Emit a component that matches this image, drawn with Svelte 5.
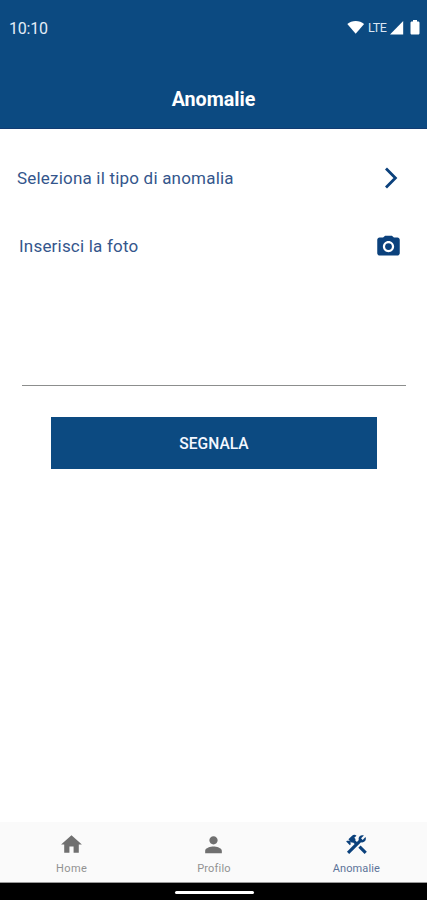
<script>
  const tabs = [
    { id: 'home', label: 'Home', spacing: 0.4 },
    { id: 'profile', label: 'Profilo', spacing: 0.2 },
    { id: 'issues', label: 'Anomalie', spacing: 0.1 }
  ];
  let active = $state('issues');
</script>

<div class="screen">
  <header>
    <div class="status">
      <span class="time">10:10</span>
      <div class="signals">
        <svg width="18" height="14" viewBox="0 0 18 14"><path d="M.3 4C4.7-.1 12.7-.1 17.1 4L8.7 13.7z" /></svg>
        <span class="lte">LTE</span>
        <svg class="cell" width="14" height="14" viewBox="0 0 14 14"><path d="M13.2 0v13.5H0z" /></svg>
        <svg class="battery" width="10" height="15" viewBox="0 0 10 15"><path d="M3 0h4v1.5h1.2c.7 0 1.3.6 1.3 1.3v10.4c0 .7-.6 1.3-1.3 1.3H1.8c-.7 0-1.3-.6-1.3-1.3V2.8c0-.7.6-1.3 1.3-1.3H3z" /></svg>
      </div>
    </div>
    <h1>Anomalie</h1>
  </header>

  <main>
    <div class="row type">
      <span>Seleziona il tipo di anomalia</span>
      <svg width="14" height="22" viewBox="0 0 14 22"><path class="chevron" d="M2 1.5l9.4 9.5L2 20.5" /></svg>
    </div>
    <div class="row photo">
      <span>Inserisci la foto</span>
      <svg width="27" height="27" viewBox="0 0 24 24">
        <circle cx="12" cy="12" r="3" />
        <path d="M9 2.4L7.17 4H4c-1.1 0-2 .9-2 2v12c0 1.1.9 2 2 2h16c1.1 0 2-.9 2-2V6c0-1.1-.9-2-2-2h-3.17L15 2.4H9zm3 14.6c-2.76 0-5-2.24-5-5s2.24-5 5-5 5 2.24 5 5-2.24 5-5 5z" />
      </svg>
    </div>
    <div class="note"></div>
    <button class="submit">SEGNALA</button>
  </main>

  <nav>
    {#each tabs as tab}
      <button class="tab" class:active={active === tab.id} onclick={() => (active = tab.id)}>
        <svg width="25" height="25" viewBox="0 0 24 24">
          {#if tab.id === 'home'}
            <path d="M10 20v-6h4v6h5v-8h3L12 3 2 12h3v8z" />
          {:else if tab.id === 'profile'}
            <path d="M12 12c2.21 0 4-1.79 4-4s-1.79-4-4-4-4 1.79-4 4 1.79 4 4 4zm0 2c-2.67 0-8 1.34-8 4v2.3h16V18c0-2.66-5.33-4-8-4z" />
          {:else}
            <path d="M13.78 15.17l2.12-2.12 6 6-2.12 2.12z" />
            <path d="M17.5 10c1.93 0 3.5-1.57 3.5-3.5 0-.58-.16-1.12-.41-1.6l-2.7 2.7-1.49-1.49 2.7-2.7c-.48-.25-1.02-.41-1.6-.41C15.57 3 14 4.57 14 6.5c0 .41.08.8.21 1.16l-1.85 1.85-1.78-1.78.71-.71-1.41-1.41L12 3.49c-1.17-1.17-3.07-1.17-4.24 0L4.22 7.03l1.41 1.41H2.81l-.71.71 3.54 3.54.71-.71V9.15l1.41 1.41.71-.71 1.78 1.78-7.41 7.41 2.12 2.12L16.34 9.79c.36.13.75.21 1.16.21z" />
          {/if}
        </svg>
        <span style="letter-spacing: {tab.spacing}px">{tab.label}</span>
      </button>
    {/each}
  </nav>
  <div class="gesture"><i></i></div>
</div>

<style>
  :global(body) { margin: 0; }
  .screen {
    width: 427px;
    height: 900px;
    display: flex;
    flex-direction: column;
    background: #fff;
    font-family: Roboto, sans-serif;
    overflow: hidden;
  }
  svg { display: block; fill: currentColor; flex: none; }
  button { border: 0; padding: 0; font-family: inherit; cursor: pointer; }
  header {
    box-sizing: border-box;
    height: 129px;
    background: #0c4a81;
    border-bottom: 1px solid #123c72;
    color: #fff;
  }
  .status {
    height: 56px;
    display: flex;
    align-items: center;
    justify-content: space-between;
    padding: 0 7px 0 9px;
    box-sizing: border-box;
  }
  .time { font-size: 16px; letter-spacing: -0.2px; color: #e3edf8; }
  .signals { display: flex; align-items: center; height: 18px; margin-top: -2px; }
  .lte { font-size: 12.5px; letter-spacing: -0.4px; margin: 0 0 0 3px; color: #dbe6f3; width: 22px; }
  .cell { margin-top: 1px; }
  .battery { margin-left: 6px; }
  h1 {
    margin: 32px 0 0;
    font-size: 19.7px;
    line-height: 24px;
    font-weight: 700;
    text-align: center;
  }
  main { flex: 1; display: flex; flex-direction: column; }
  .row {
    display: flex;
    align-items: center;
    justify-content: space-between;
    height: 68px;
    box-sizing: border-box;
    font-size: 17px;
    letter-spacing: 0.2px;
    color: #34568c;
  }
  .row svg { color: #0b417c; }
  .type { margin-top: 15px; padding: 0 29px 0 17px; }
  .photo { padding: 0 25px 0 19px; }
  .chevron { fill: none; stroke: currentColor; stroke-width: 2.8; }
  .note { height: 105px; margin: 0 21px 0 22px; border-bottom: 1px solid #8c8e8d; }
  .submit {
    margin: 31px 50px 0 51px;
    padding-top: 2px;
    height: 52px;
    background: #0c4a81;
    color: #f3f7ff;
    font-size: 15.6px;
    font-weight: 500;
  }
  nav { height: 60px; display: flex; background: #fafafa; border-bottom: 1px solid #999; }
  .tab {
    flex: 1;
    display: flex;
    flex-direction: column;
    align-items: center;
    background: none;
    color: #707070;
    padding: 10px 0 0 1px;
  }
  .tab span { font-size: 11px; line-height: 14px; margin-top: 5px; color: #929292; }
  .tab.active { color: #0b417c; }
  .tab.active span { color: #5c7399; }
  .gesture { height: 17px; background: #000; display: flex; justify-content: center; }
  .gesture i { width: 79px; height: 3px; border-radius: 2px; background: #fff; margin: 8px 0 0 1px; }
</style>
